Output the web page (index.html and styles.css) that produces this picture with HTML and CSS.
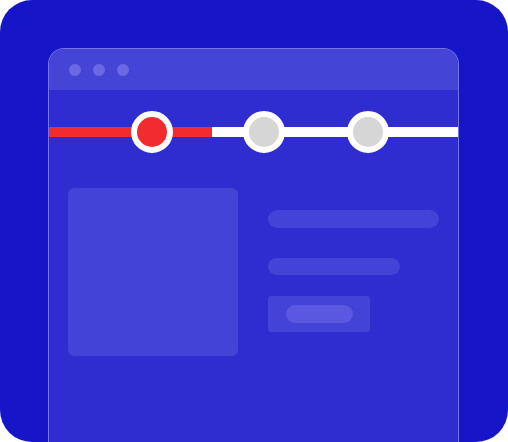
FILE: index.html
```html
<!DOCTYPE html>
<html>
<head>
<meta charset="utf-8">
<link rel="stylesheet" href="styles.css">
</head>
<body>
<div class="frame">
  <div class="window">
    <div class="titlebar">
      <span class="dot"></span><span class="dot"></span><span class="dot"></span>
    </div>
    <div class="content">
      <div class="steps">
        <span class="step step-1 active"></span>
        <span class="step step-2"></span>
        <span class="step step-3"></span>
      </div>
      <div class="main">
        <div class="card"></div>
        <div class="side">
          <div class="bar bar-long"></div>
          <div class="bar bar-mid"></div>
          <div class="btn"><div class="btn-pill"></div></div>
        </div>
      </div>
    </div>
  </div>
</div>
</body>
</html>
```
FILE: styles.css
```css
html, body {
  margin: 0;
  padding: 0;
  background: #ffffff;
}
.frame {
  width: 508px;
  height: 442px;
  box-sizing: border-box;
  border-radius: 32px;
  background: #1616c8;
  overflow: hidden;
  padding: 48px 49px 0 48px;
}
.window {
  height: 420px;
  border: 1px solid #7573e6;
  border-bottom: none;
  border-radius: 16px 16px 0 0;
  background: #2f2dd0;
  overflow: hidden;
}
.titlebar {
  height: 41px;
  background: #4444d7;
  display: flex;
  align-items: center;
  gap: 12px;
  padding-left: 20px;
}
.dot {
  width: 12px;
  height: 12px;
  border-radius: 50%;
  background: #6a68e2;
}
.steps {
  margin-top: 21px;
  height: 42px;
  display: flex;
  align-items: center;
  background-image: linear-gradient(to right, #f22b2f 0, #f22b2f 163px, #ffffff 163px, #ffffff 100%);
  background-size: 100% 10px;
  background-position: 0 center;
  background-repeat: no-repeat;
}
.step {
  width: 30px;
  height: 30px;
  border: 6px solid #ffffff;
  border-radius: 50%;
  background: #d6d6d6;
}
.step.active { background: #f22b2f; }
.step-1 { margin-left: 82px; }
.step-2 { margin-left: 70px; }
.step-3 { margin-left: 62px; }
.main {
  display: flex;
  gap: 30px;
  margin-top: 35px;
  padding-left: 19px;
}
.card {
  width: 170px;
  height: 168px;
  border-radius: 6px;
  background: #4443d7;
}
.side {
  padding-top: 22px;
  display: flex;
  flex-direction: column;
  align-items: flex-start;
}
.bar {
  height: 18px;
  border-radius: 9px;
  background: #4443d7;
}
.bar-long { width: 171px; }
.bar-mid { width: 132px; height: 17px; margin-top: 30px; }
.btn {
  margin-top: 21px;
  width: 102px;
  height: 36px;
  box-sizing: border-box;
  padding: 9px 0 0 18px;
  border-radius: 3px;
  background: #4443d7;
}
.btn-pill {
  width: 67px;
  height: 18px;
  border-radius: 9px;
  background: #5a58e0;
}
```
